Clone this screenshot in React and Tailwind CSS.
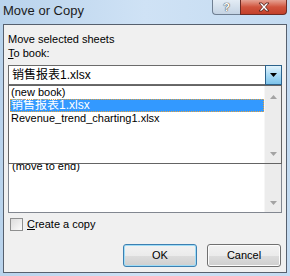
import React from "react";

const ui = { fontFamily: '"Liberation Sans", Arial, "Noto Sans CJK SC", sans-serif' };

function ArrowUp() {
  return (
    <svg width="7" height="4" viewBox="0 0 7 4">
      <path d="M0 4 L3.5 0 L7 4 Z" fill="#a3a3a3" />
    </svg>
  );
}

function ArrowDown() {
  return (
    <svg width="7" height="4" viewBox="0 0 7 4">
      <path d="M0 0 L7 0 L3.5 4 Z" fill="#a3a3a3" />
    </svg>
  );
}

export default function App() {
  return (
    <div
      className="w-[290px] h-[276px] flex flex-col bg-gradient-to-r from-[#b9d3ec] via-[#cfe2f5] to-[#c4dbf1] overflow-hidden"
      style={ui}
    >
      {/* Title bar */}
      <div className="h-[24px] flex items-start shrink-0">
        <div className="pl-[3px] pt-[3px] text-[13px] leading-[15px] text-[#1b1b1b]">Move or Copy</div>
        <div className="ml-auto mr-[3px] flex">
          <div className="w-[28px] h-[15px] rounded-bl-[4px] border border-t-0 border-r-0 border-[#6f7f92] bg-gradient-to-b from-[#e3ecf5] to-[#c4d3e3] flex items-center justify-center text-[11px] font-bold text-white [text-shadow:0_0_1px_#333,0_0_1px_#333]">
            ?
          </div>
          <div className="w-[47px] h-[15px] rounded-br-[4px] border border-t-0 border-[#6d2b24] bg-gradient-to-b from-[#e5a294] via-[#d0533d] to-[#c3402a] flex items-center justify-center">
            <svg width="12" height="10" viewBox="0 0 12 10">
              <path
                d="M1 1 L4 1 L6 3.5 L8 1 L11 1 L7.5 5 L11 9 L8 9 L6 6.5 L4 9 L1 9 L4.5 5 Z"
                fill="#fff"
                stroke="#4a1a14"
                strokeWidth="0.8"
                strokeLinejoin="round"
              />
            </svg>
          </div>
        </div>
      </div>

      {/* Client area */}
      <div className="flex-1 mx-[3px] mb-[3px] border border-[#56606e] bg-[#f0f0f0] pl-[4px] pr-[4px] pt-[8px] flex flex-col text-[11px] leading-[13px] text-black relative">
        <div>Move selected sheets</div>
        <div className="mt-[1px]">
          <span className="underline">T</span>o book:
        </div>

        {/* Combobox */}
        <div className="relative mt-[5px]">
          <div className="h-[20px] flex border border-[#6b6b6b] bg-white">
            <div className="flex-1 pl-[3px] flex items-center text-[12px]">销售报表1.xlsx</div>
            <div className="w-[17px] -my-[1px] -mr-[1px] border border-[#2c628b] bg-gradient-to-b from-[#e3f4fc] via-[#a9daf5] to-[#7cc3ea] flex items-center justify-center">
              <svg width="7" height="4" viewBox="0 0 7 4">
                <path d="M0 0 L7 0 L3.5 4 Z" fill="#000" />
              </svg>
            </div>
          </div>

          {/* Dropdown list */}
          <div className="absolute left-0 right-0 top-[20px] h-[79px] z-10 border border-[#646464] bg-white flex text-[11px] leading-[13px]">
            <div className="flex-1 flex flex-col pl-[1px]">
              <div className="h-[13px] pl-[1px]">(new book)</div>
              <div className="h-[13px] pl-[1px] bg-[#3399ff] text-white outline-1 outline-dotted outline-[#e8a33b] -outline-offset-1 text-[12px] leading-[13px]">
                销售报表1.xlsx
              </div>
              <div className="h-[13px] pl-[1px]">Revenue_trend_charting1.xlsx</div>
            </div>
            <div className="w-[17px] bg-[#ececec] border-l border-[#f6f6f6] flex flex-col items-center justify-between pt-[9px] pb-[7px]">
              <ArrowUp />
              <ArrowDown />
            </div>
          </div>
        </div>

        {/* Before sheet label sits under the open dropdown */}
        <div className="mt-[6px] h-[13px]" />

        {/* Before sheet list */}
        <div className="mt-[2px] h-[107px] border border-[#828790] bg-white flex">
          <div className="flex-1 pl-[3px] pt-[53px]">(move to end)</div>
          <div className="w-[17px] bg-[#ececec] border-l border-[#f6f6f6] flex flex-col items-center justify-end pb-[7px]">
            <ArrowDown />
          </div>
        </div>

        {/* Checkbox */}
        <div className="mt-[5px] flex items-center gap-[4px] pl-[2px] h-[13px]">
          <div className="w-[13px] h-[13px] border border-[#8e8f8f] bg-gradient-to-br from-[#dcdcdc] to-[#fbfbfb]" />
          <div>
            <span className="underline">C</span>reate a copy
          </div>
        </div>

        {/* Buttons */}
        <div className="mt-[13px] flex justify-end gap-[10px] pr-[1px]">
          <button className="w-[74px] h-[23px] rounded-[3px] border border-[#3c7fb1] bg-[linear-gradient(#f2f2f2_0%,#ebebeb_50%,#dddddd_50%,#cfcfcf_100%)] shadow-[inset_0_0_0_1px_#9fdcf6] text-[11px] text-black">
            OK
          </button>
          <button className="w-[74px] h-[23px] rounded-[3px] border border-[#707070] bg-[linear-gradient(#f2f2f2_0%,#ebebeb_50%,#dddddd_50%,#cfcfcf_100%)] shadow-[inset_0_0_0_1px_#fcfcfc] text-[11px] text-black">
            Cancel
          </button>
        </div>
      </div>
    </div>
  );
}
